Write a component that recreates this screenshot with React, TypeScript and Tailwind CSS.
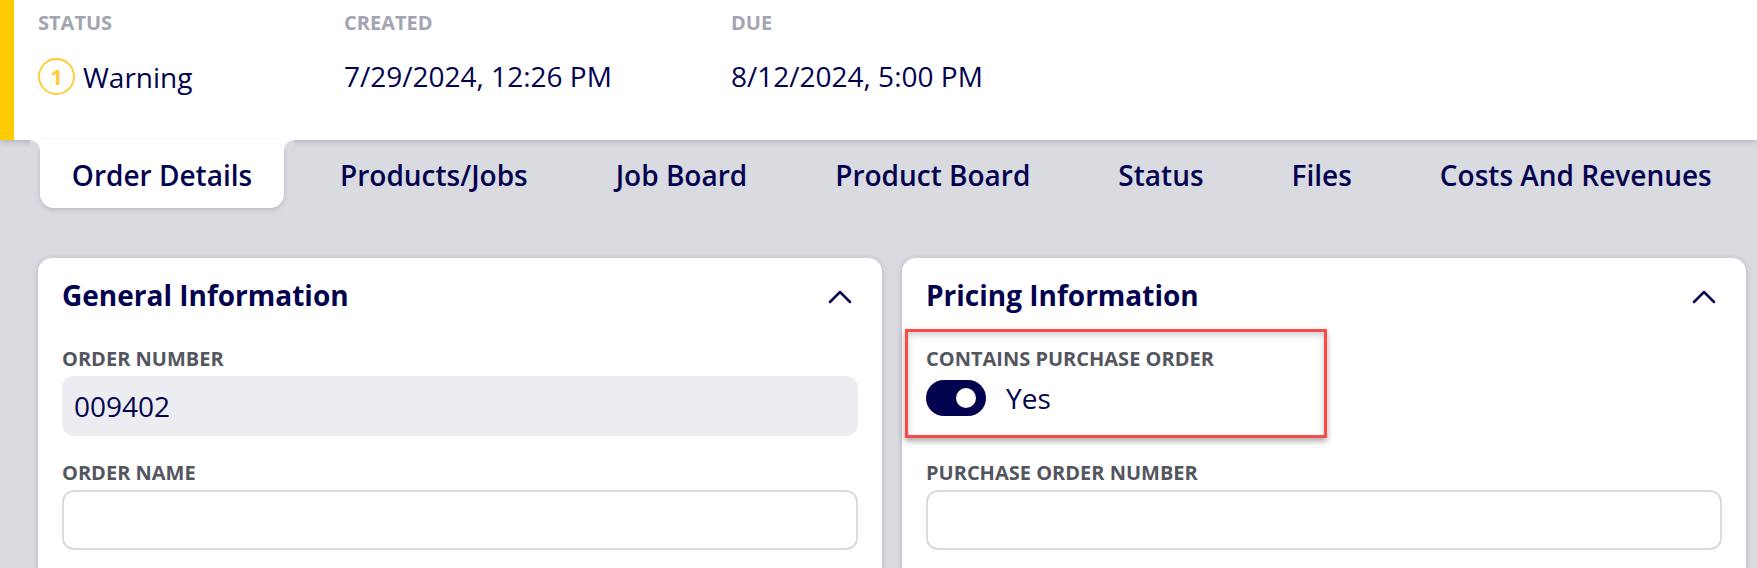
import { ChevronUp } from "lucide-react";

const navy = "text-[#03034f]";

const tabs = ["Products/Jobs", "Job Board", "Product Board", "Status", "Files", "Costs And Revenues"];

function Label({ children }: { children: string }) {
  return <div className="h-[26px] text-[20px] leading-[26px] font-bold text-[#54565f] uppercase">{children}</div>;
}

function HeaderField({ label, value, className }: { label: string; value: string; className: string }) {
  return (
    <div className={className}>
      <div className="text-[20px] leading-[22px] font-bold text-[#a2a5b1] uppercase">{label}</div>
      <div className={`mt-[24px] text-[28px] leading-[36px] ${navy}`}>{value}</div>
    </div>
  );
}

function CardHead({ title }: { title: string }) {
  return (
    <div className="flex items-center justify-between h-[74px] pl-[24px] pr-[22px]">
      <h2 className={`text-[28px] font-bold ${navy}`}>{title}</h2>
      <ChevronUp className={`w-[40px] h-[40px] mt-[3px] ${navy}`} strokeWidth={1.5} />
    </div>
  );
}

export default function App() {
  return (
    <div className="w-[1757px] h-[568px] overflow-hidden bg-[#dadbe1] font-['Open_Sans',sans-serif]">
      <div className="relative z-10 h-[140px] bg-white border-l-[14px] border-[#ffcb00] pl-[24px] pt-[12px] flex shadow-[0_2px_6px_rgba(0,0,0,0.18)]">
        <div className="w-[306px]">
          <div className="text-[20px] leading-[22px] font-bold text-[#a2a5b1] uppercase">Status</div>
          <div className="mt-[24px] flex items-center gap-[8px]">
            <span className="w-[37px] h-[37px] rounded-full border-2 border-[#ffcb3d] flex items-center justify-center text-[22px] font-bold text-[#ffcb3d]">1</span>
            <span className={`text-[28px] leading-[36px] ${navy}`}>Warning</span>
          </div>
        </div>
        <HeaderField label="Created" value="7/29/2024, 12:26 PM" className="w-[387px]" />
        <HeaderField label="Due" value="8/12/2024, 5:00 PM" className="" />
      </div>

      <div className="relative z-20 flex pl-[40px] gap-[24px] h-[68px]">
        <div className={`relative w-[244px] h-[68px] pt-[1px] bg-white rounded-b-[14px] shadow-[0_2px_5px_rgba(0,0,0,0.15)] flex items-center justify-center text-[28px] font-semibold ${navy}`}>
          <span className="absolute -left-[10px] top-0 w-[10px] h-[10px] bg-white"><span className="block w-full h-full bg-[#dadbe1] rounded-tr-[10px]" /></span>
          <span className="absolute -right-[10px] top-0 w-[10px] h-[10px] bg-white"><span className="block w-full h-full bg-[#dadbe1] rounded-tl-[10px]" /></span>
          Order Details
        </div>
        {tabs.map((t) => (
          <div key={t} className={`px-[32px] pt-[1px] flex items-center text-[28px] font-semibold ${navy}`}>{t}</div>
        ))}
      </div>

      <div className="flex gap-[20px] pl-[38px] mt-[50px]">
        <section className="w-[844px] h-[400px] bg-white rounded-[14px] shadow-[0_1px_6px_rgba(0,0,0,0.18)]">
          <CardHead title="General Information" />
          <div className="px-[24px] pt-[14px]">
            <Label>Order Number</Label>
            <div className={`mt-[4px] h-[60px] rounded-[12px] bg-[#ecedf1] px-[12px] flex items-center text-[28px] ${navy}`}>009402</div>
            <div className="mt-[24px]"><Label>Order Name</Label></div>
            <div className="mt-[4px] h-[60px] rounded-[12px] border-2 border-[#dadbe1] bg-white" />
          </div>
        </section>

        <section className="relative w-[844px] h-[400px] bg-white rounded-[14px] shadow-[0_1px_6px_rgba(0,0,0,0.18)]">
          <CardHead title="Pricing Information" />
          <div className="px-[24px] pt-[14px]">
            <Label>Contains Purchase Order</Label>
            <div className="mt-[8px] h-[56px] flex items-start gap-[20px]">
              <div className="relative w-[60px] h-[36px] rounded-full bg-[#03034f]">
                <span className="absolute left-[30px] top-[8px] w-[20px] h-[20px] rounded-full bg-white" />
              </div>
              <span className={`text-[28px] leading-[36px] ${navy}`}>Yes</span>
            </div>
            <div className="mt-[24px]"><Label>Purchase Order Number</Label></div>
            <div className="mt-[4px] h-[60px] rounded-[12px] border-2 border-[#dadbe1] bg-white" />
          </div>
          <div className="absolute left-[3px] top-[71px] w-[422px] h-[109px] border-[3px] border-[#f94a4a] shadow-[0_3px_6px_rgba(0,0,0,0.35),inset_0_3px_6px_rgba(0,0,0,0.2)]" />
        </section>
      </div>
    </div>
  );
}
